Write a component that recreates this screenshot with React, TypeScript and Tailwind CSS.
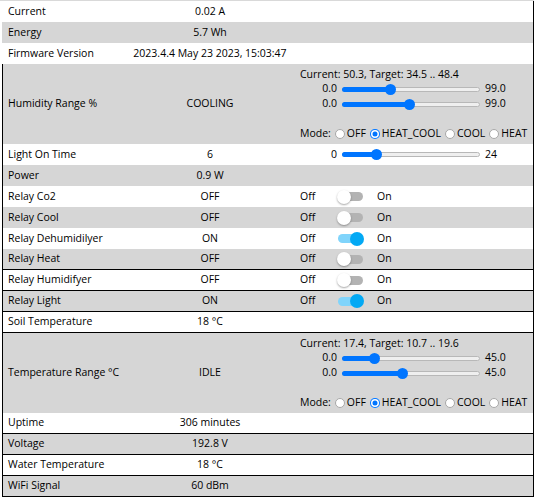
import React from "react";

type Row =
  | { kind: "text"; label: string; value: string; gray: boolean; bb?: boolean; bl?: boolean }
  | { kind: "switch"; label: string; value: string; on: boolean; gray: boolean; bb?: boolean; bl?: boolean }
  | { kind: "light"; label: string; value: string; gray: boolean; bb?: boolean; bl?: boolean }
  | {
      kind: "range";
      label: string;
      value: string;
      gray: boolean;
      bb?: boolean;
      bl?: boolean;
      current: string;
      lo: number;
      hi: number;
      max: number;
      maxLabel: string;
    };

function Slider({ value, max }: { value: number; max: number }) {
  const pct = (value / max) * 100;
  return (
    <div className="relative w-[138px] h-[11px] shrink-0">
      <div className="absolute left-0 right-0 top-[3px] h-[5px] rounded-full bg-[#efefef] border border-[#b8b8b8]" />
      <div
        className="absolute left-0 top-[3px] h-[5px] rounded-full bg-[#0075ff]"
        style={{ width: `${pct}%` }}
      />
      <div
        className="absolute top-0 w-[11px] h-[11px] rounded-full bg-[#0075ff]"
        style={{ left: `calc(${pct}% - 5.5px)` }}
      />
    </div>
  );
}

function SliderLine({ left, right, value, max }: { left: string; right: string; value: number; max: number }) {
  return (
    <div className="flex items-center h-[15px]">
      <span className="w-[37px] text-right">{left}</span>
      <div className="ml-[5px]">
        <Slider value={value} max={max} />
      </div>
      <span className="ml-[5px]">{right}</span>
    </div>
  );
}

function Toggle({ on }: { on: boolean }) {
  return (
    <div className="relative w-[27px] h-[14px] shrink-0">
      <div
        className={
          "absolute left-[1px] top-[2.5px] w-[25px] h-[9px] rounded-full " +
          (on ? "bg-[#80d4fb]" : "bg-[#b3b3b3]")
        }
      />
      <div
        className={
          "absolute top-0 w-[14px] h-[14px] rounded-full " +
          (on ? "left-[13px] bg-[#03a9f4]" : "left-0 bg-white shadow-[0_1px_2px_rgba(0,0,0,0.35)]")
        }
      />
    </div>
  );
}

function Radio({ checked }: { checked: boolean }) {
  return (
    <span
      className={
        "inline-block w-[10px] h-[10px] rounded-full shrink-0 ml-[4px] mr-[2px] " +
        (checked
          ? "bg-[#0075ff] shadow-[inset_0_0_0_1px_#0075ff,inset_0_0_0_2.5px_#ffffff]"
          : "bg-white border border-[#a8a8a8]")
      }
    />
  );
}

function ModeLine() {
  const opts = ["OFF", "HEAT_COOL", "COOL", "HEAT"];
  return (
    <div className="flex items-center h-[15px] whitespace-nowrap">
      <span>Mode:</span>
      {opts.map((o) => (
        <React.Fragment key={o}>
          <Radio checked={o === "HEAT_COOL"} />
          <span>{o}</span>
        </React.Fragment>
      ))}
    </div>
  );
}

const rows: Row[] = [
  { kind: "text", label: "Current", value: "0.02 A", gray: false },
  { kind: "text", label: "Energy", value: "5.7 Wh", gray: true },
  { kind: "text", label: "Firmware Version", value: "2023.4.4 May 23 2023, 15:03:47", gray: false },
  {
    kind: "range",
    label: "Humidity Range %",
    value: "COOLING",
    gray: true,
    bl: true,
    current: "Current: 50.3, Target: 34.5 .. 48.4",
    lo: 34.5,
    hi: 48.4,
    max: 99,
    maxLabel: "99.0",
  },
  { kind: "light", label: "Light On Time", value: "6", gray: false, bl: true },
  { kind: "text", label: "Power", value: "0.9 W", gray: true, bl: true },
  { kind: "switch", label: "Relay Co2", value: "OFF", on: false, gray: false, bl: true },
  { kind: "switch", label: "Relay Cool", value: "OFF", on: false, gray: true, bl: true },
  { kind: "switch", label: "Relay Dehumidilyer", value: "ON", on: true, gray: false, bl: true },
  { kind: "switch", label: "Relay Heat", value: "OFF", on: false, gray: true, bl: true, bb: true },
  { kind: "switch", label: "Relay Humidifyer", value: "OFF", on: false, gray: false, bl: true, bb: true },
  { kind: "switch", label: "Relay Light", value: "ON", on: true, gray: true, bl: true, bb: true },
  { kind: "text", label: "Soil Temperature", value: "18 °C", gray: false, bl: true, bb: true },
  {
    kind: "range",
    label: "Temperature Range °C",
    value: "IDLE",
    gray: true,
    bl: true,
    current: "Current: 17.4, Target: 10.7 .. 19.6",
    lo: 10.7,
    hi: 19.6,
    max: 45,
    maxLabel: "45.0",
  },
  { kind: "text", label: "Uptime", value: "306 minutes", gray: false, bl: true, bb: true },
  { kind: "text", label: "Voltage", value: "192.8 V", gray: true, bl: true, bb: true },
  { kind: "text", label: "Water Temperature", value: "18 °C", gray: false, bl: true, bb: true },
  { kind: "text", label: "WiFi Signal", value: "60 dBm", gray: true, bl: true, bb: true },
];

function Control({ row }: { row: Row }) {
  if (row.kind === "switch") {
    return (
      <div className="flex items-center pl-[10px]">
        <span className="w-[37px]">Off</span>
        <Toggle on={row.on} />
        <span className="ml-[13px]">On</span>
      </div>
    );
  }
  if (row.kind === "light") {
    return (
      <div className="pl-[10px]">
        <SliderLine left="0" right="24" value={6} max={24} />
      </div>
    );
  }
  if (row.kind === "range") {
    return (
      <div className="flex flex-col pl-[10px]">
        <div className="h-[15px] leading-[15px] whitespace-nowrap">{row.current}</div>
        <SliderLine left="0.0" right={row.maxLabel} value={row.lo} max={row.max} />
        <SliderLine left="0.0" right={row.maxLabel} value={row.hi} max={row.max} />
        <div className="h-[15px]" />
        <ModeLine />
      </div>
    );
  }
  return null;
}

export default function App() {
  return (
    <div
      className="w-[539px] h-[501px] bg-white overflow-hidden text-[10.5px] text-black"
      style={{ fontFamily: '"Open Sans", "Noto Sans", sans-serif' }}
    >
      <div className="h-px bg-[#d9d9d9] w-[534px]" />
      <div className="ml-[2px] w-[532px] border-r border-black">
        {rows.map((r) => (
          <div
            key={r.label}
            className={
              "grid grid-cols-[128px_160px_1fr] items-center " +
              (r.kind === "range" ? "h-[80px] " : "h-[21px] ") +
              (r.gray ? "bg-[#d6d6d6] " : "bg-white ") +
              (r.bb ? "border-b border-black " : "") +
              (r.bl ? "shadow-[inset_1px_0_0_#000] " : "")
            }
          >
            <div className="pl-[6px] whitespace-nowrap">{r.label}</div>
            <div className="text-center whitespace-nowrap">{r.value}</div>
            <Control row={r} />
          </div>
        ))}
      </div>
    </div>
  );
}
